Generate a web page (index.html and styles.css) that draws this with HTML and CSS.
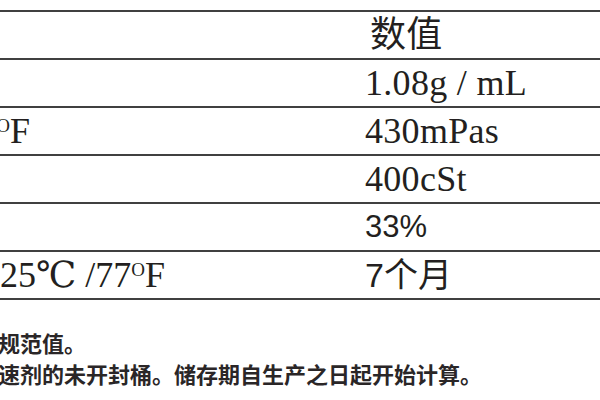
FILE: index.html
```html
<!DOCTYPE html>
<html lang="zh-CN">
<head>
<meta charset="utf-8">
<title>技术参数</title>
<link rel="stylesheet" href="styles.css">
</head>
<body>
<main class="page">
  <table class="spec">
    <tr>
      <th class="label">项目</th>
      <th class="value">数值</th>
    </tr>
    <tr>
      <td class="label">密度</td>
      <td class="value">1.08g / mL</td>
    </tr>
    <tr>
      <td class="label">粘度， 25℃ /77<span class="deg">O</span>F</td>
      <td class="value">430mPas</td>
    </tr>
    <tr>
      <td class="label">运动粘度</td>
      <td class="value">400cSt</td>
    </tr>
    <tr>
      <td class="label">固体含量</td>
      <td class="value sans pct">33%</td>
    </tr>
    <tr>
      <td class="label">未开封保质期，25℃ /77<span class="deg">O</span>F</td>
      <td class="value sans">7个月</td>
    </tr>
  </table>
  <div class="notes">
    <p>典型值，非规范值。</p>
    <p>适用于含加速剂的未开封桶。储存期自生产之日起开始计算。</p>
  </div>
</main>
</body>
</html>
```
FILE: styles.css
```css
html, body {
  margin: 0;
  padding: 0;
  background: #ffffff;
}

body {
  width: 600px;
  height: 400px;
  overflow: hidden;
  font-family: "Liberation Serif", "DejaVu Serif", "Noto Sans CJK SC", serif;
  color: #231f20;
}

.page {
  padding-top: 10px;
}

.spec {
  border-collapse: collapse;
  margin-left: -252px;
  width: 900px;
}

.spec th,
.spec td {
  border-top: 2px solid #404040;
  border-bottom: 2px solid #404040;
  height: 46px;
  padding: 0;
  font-size: 36px;
  font-weight: normal;
  line-height: 46px;
  text-align: left;
  vertical-align: middle;
  white-space: nowrap;
}

.spec .label {
  width: 617px;
}

.spec th.value {
  padding-left: 5px;
}

.spec .value {
  letter-spacing: 0.3px;
}

.spec .sans {
  font-family: "Liberation Sans", "Noto Sans CJK SC", sans-serif;
  font-size: 34px;
  letter-spacing: 0;
}

.spec .pct {
  font-size: 31px;
}

.deg {
  font-size: 19px;
  vertical-align: 11px;
  line-height: 0;
}

.notes {
  margin-left: -112px;
  margin-top: 27px;
  font-family: "Noto Sans CJK SC", sans-serif;
  font-size: 22px;
  font-weight: 700;
  line-height: 31px;
  color: #2a2627;
}

.notes p {
  margin: 0;
  white-space: nowrap;
}
```
